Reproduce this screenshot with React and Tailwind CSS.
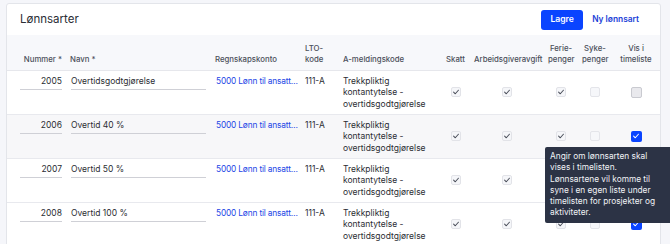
import React from "react";

const rows = [
  { nr: "2005", name: "Overtidsgodtgjørelse", vis: "off", bg: "bg-white" },
  { nr: "2006", name: "Overtid 40 %", vis: "on", bg: "bg-[#f7f7f9]" },
  { nr: "2007", name: "Overtid 50 %", vis: "none", bg: "bg-white" },
  { nr: "2008", name: "Overtid 100 %", vis: "on", bg: "bg-white" },
];

function Check({ color = "#4b4f5a" }) {
  return (
    <svg viewBox="0 0 10 10" className="w-[8px] h-[8px]">
      <path d="M2 5.2 L4.1 7.2 L8 2.8" fill="none" stroke={color} strokeWidth="1.3" strokeLinecap="round" strokeLinejoin="round" />
    </svg>
  );
}

function Box({ kind }) {
  if (kind === "checked") {
    return (
      <span className="inline-flex w-[10px] h-[10px] items-center justify-center rounded-[2px] border border-[#e2e3e8] bg-[#f5f6f9]">
        <Check />
      </span>
    );
  }
  if (kind === "blue") {
    return (
      <span className="inline-flex w-[11px] h-[11px] items-center justify-center rounded-[2px] bg-[#0a44ff]">
        <Check color="#ffffff" />
      </span>
    );
  }
  if (kind === "gray") {
    return <span className="inline-block w-[11px] h-[11px] rounded-[2px] border border-[#c9cad0] bg-[#e9e9ed]" />;
  }
  if (kind === "none") return null;
  return <span className="inline-block w-[10px] h-[10px] rounded-[2px] border border-[#e4e5ea] bg-[#f6f7fa]" />;
}

export default function App() {
  const th = "px-[4px] pb-[5px] align-bottom font-medium text-[7.8px] leading-[11px] text-[#4b4f5a]";
  return (
    <div
      className="relative h-[244px] w-[670px] overflow-hidden bg-[#f5f6fa] pt-[3px]"
      style={{ fontFamily: "Inter, 'Noto Sans', sans-serif" }}
    >
      <div className="ml-[6px] w-[655px] rounded-[3px] border border-[#e3e5ea] bg-white">
        <div className="flex h-[31px] items-center justify-between pl-[13px] pr-[21px]">
          <h1 className="text-[11.5px] font-normal text-[#2a2d35]">Lønnsarter</h1>
          <div className="flex items-center gap-[9px]">
            <button className="h-[20px] w-[42px] rounded-[3px] bg-[#0a44ff] text-[8.6px] font-semibold text-white">
              Lagre
            </button>
            <button className="text-[8.4px] font-semibold text-[#1c3fd8]">Ny lønnsart</button>
          </div>
        </div>
        <table className="w-[653px] table-fixed border-collapse">
          <colgroup>
            <col className="w-[59px]" />
            <col className="w-[145px]" />
            <col className="w-[90px]" />
            <col className="w-[38px]" />
            <col className="w-[102px]" />
            <col className="w-[29px]" />
            <col className="w-[74px]" />
            <col className="w-[34px]" />
            <col className="w-[34px]" />
            <col className="w-[48px]" />
          </colgroup>
          <thead>
            <tr className="h-[35px] border-b border-[#e6e7ec] bg-[#f7f8fb]">
              <th className={`${th} text-right`}>Nummer *</th>
              <th className={`${th} text-left`}>Navn *</th>
              <th className={`${th} text-left`}>Regnskapskonto</th>
              <th className={`${th} text-left`}>LTO-<br />kode</th>
              <th className={`${th} text-left`}>A-meldingskode</th>
              <th className={`${th} text-center px-0`}>Skatt</th>
              <th className={`${th} text-center px-0`}>Arbeidsgiveravgift</th>
              <th className={`${th} text-center px-0`}>Ferie-<br />penger</th>
              <th className={`${th} text-center px-0`}>Syke-<br />penger</th>
              <th className={`${th} text-center px-0`}>Vis i<br />timeliste</th>
            </tr>
          </thead>
          <tbody className="text-[8.5px] leading-[11.5px] text-[#2b2d33]">
            {rows.map((r) => (
              <tr key={r.nr} className={`h-[44px] border-b border-[#e8e9ee] ${r.bg}`}>
                <td className="pl-[13px] pr-[4px] pt-[5px] align-top">
                  <div className="border-b border-[#cfd0d6] pb-[2px] text-right">{r.nr}</div>
                </td>
                <td className="pl-[5px] pr-[5px] pt-[5px] align-top">
                  <div className="border-b border-[#cfd0d6] pb-[2px]">{r.name}</div>
                </td>
                <td className="pl-[5px] pr-[2px] pt-[5px] align-top">
                  <div className="whitespace-nowrap text-[8.3px] tracking-[-0.15px] text-[#2447e6]">5000 Lønn til ansatt…</div>
                </td>
                <td className="px-[4px] pt-[5px] align-top">111-A</td>
                <td className="px-[4px] pt-[5px] align-top">
                  Trekkpliktig
                  <br />
                  kontantytelse -
                  <br />
                  overtidsgodtgjørelse
                </td>
                <td className="text-center align-middle"><div className="flex justify-center"><Box kind="checked" /></div></td>
                <td className="text-center align-middle"><div className="flex justify-center"><Box kind="checked" /></div></td>
                <td className="text-center align-middle"><div className="flex justify-center"><Box kind="checked" /></div></td>
                <td className="text-center align-middle"><div className="flex justify-center"><Box kind="empty" /></div></td>
                <td className="text-center align-middle">
                  <div className="flex justify-center">
                    <Box kind={r.vis === "on" ? "blue" : r.vis === "off" ? "gray" : "none"} />
                  </div>
                </td>
              </tr>
            ))}
          </tbody>
        </table>
      </div>
      <div className="absolute left-[545px] top-[147px] w-[140px] whitespace-nowrap rounded-[2px] bg-[#2c3345] px-[5px] py-[4px] text-[8.3px] leading-[11.3px] text-[#f1f2f5]">
        Angir om lønnsarten skal
        <br />
        vises i timelisten.
        <br />
        Lønnsartene vil komme til
        <br />
        syne i en egen liste under
        <br />
        timelisten for prosjekter og
        <br />
        aktiviteter.
      </div>
    </div>
  );
}
